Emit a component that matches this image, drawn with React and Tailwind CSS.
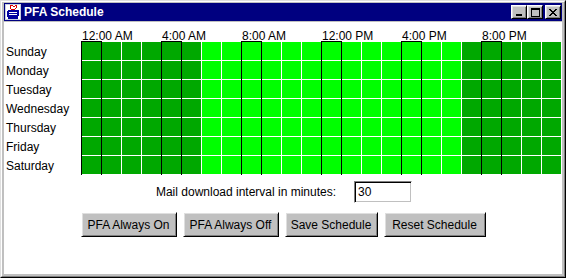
import React from 'react';

const days = ['Sunday', 'Monday', 'Tuesday', 'Wednesday', 'Thursday', 'Friday', 'Saturday'];
const hourLabels = ['12:00 AM', '4:00 AM', '8:00 AM', '12:00 PM', '4:00 PM', '8:00 PM'];
const hours = Array.from({ length: 24 }, (_, i) => i);

const isMarked = (h) => h >= 0 && h < 24 && h % 4 === 0;
const isDaytime = (h) => h >= 6 && h <= 18;

const raised = 'bg-[#c0c0c0] border border-t-white border-l-white border-r-black border-b-black shadow-[inset_1px_1px_0_#dfdfdf,inset_-1px_-1px_0_#808080]';

const AppIcon = () => (
  <svg width="16" height="16" viewBox="0 0 16 16" shapeRendering="crispEdges">
    <rect x="0" y="0" width="16" height="16" fill="#c8d0e0" />
    <rect x="1" y="1" width="14" height="14" fill="#ffffff" />
    <path d="M5 2 L7 1 L9 3 L11 1 L12 3 L10 5 L6 5 Z" fill="none" stroke="#e00000" strokeWidth="1" />
    <rect x="2" y="6" width="12" height="7" rx="2" fill="#0000a0" />
    <rect x="4" y="8" width="8" height="1" fill="#ffffff" />
    <rect x="4" y="10" width="8" height="1" fill="#ffffff" />
    <rect x="3" y="13" width="10" height="2" fill="#0000a0" />
  </svg>
);

const CloseGlyph = () => (
  <svg width="8" height="7" viewBox="0 0 8 7" shapeRendering="crispEdges">
    {[
      [0, 0], [1, 0], [6, 0], [7, 0],
      [1, 1], [2, 1], [5, 1], [6, 1],
      [2, 2], [3, 2], [4, 2], [5, 2],
      [3, 3], [4, 3],
      [2, 4], [3, 4], [4, 4], [5, 4],
      [1, 5], [2, 5], [5, 5], [6, 5],
      [0, 6], [1, 6], [6, 6], [7, 6],
    ].map(([x, y]) => (
      <rect key={`${x}-${y}`} x={x} y={y} width="1" height="1" fill="#000" />
    ))}
  </svg>
);

const TitleButton = ({ children, className = '' }) => (
  <div className={`w-[16px] h-[14px] flex items-center justify-center ${raised} ${className}`}>
    {children}
  </div>
);

const ScheduleGrid = () => (
  <div className="flex">
    {hours.map((h) => (
      <React.Fragment key={h}>
        <div className={`w-px h-[134px] ${isMarked(h) || isMarked(h - 1) ? 'bg-black' : 'bg-white'}`} />
        <div className="flex flex-col w-[19px]">
          <div className={`h-px ${isMarked(h) ? 'bg-black' : 'bg-white'}`} />
          {days.map((d) => (
            <div
              key={d}
              className={`h-[18px] mb-px ${isDaytime(h) ? 'bg-[#00ff00]' : 'bg-[#00a800]'}`}
            />
          ))}
        </div>
      </React.Fragment>
    ))}
    <div className={`w-px h-[134px] ${isMarked(23) ? 'bg-black' : 'bg-white'}`} />
  </div>
);

const App = () => {
  return (
    <div className="w-[566px] h-[278px] bg-[#c0c0c0] border border-t-[#dfdfdf] border-l-[#dfdfdf] border-r-black border-b-black font-['Liberation_Sans',Arial,sans-serif] text-[12px] text-black">
      <div className="h-full flex flex-col border border-t-white border-l-white border-r-[#808080] border-b-[#808080] px-[2px] pt-px pb-[2px]">
        {/* title bar */}
        <div className="h-[18px] bg-[#000080] flex items-center pl-px pr-px shrink-0">
          <AppIcon />
          <span className="ml-[3px] text-white font-bold text-[12px] leading-none">PFA Schedule</span>
          <div className="ml-auto flex items-center">
            <TitleButton>
              <div className="w-[6px] h-[2px] bg-black mt-[6px] -ml-[1px]" />
            </TitleButton>
            <TitleButton>
              <div className="w-[9px] h-[9px] border border-black border-t-2" />
            </TitleButton>
            <TitleButton className="ml-[2px]">
              <CloseGlyph />
            </TitleButton>
          </div>
        </div>

        {/* content */}
        <div className="mt-px flex-1 bg-white flex flex-col">
          <div className="flex pl-[78px] pt-[8px]">
            {hourLabels.map((l) => (
              <div key={l} className="w-[80px] h-[11px] leading-[13px] whitespace-nowrap">
                {l}
              </div>
            ))}
          </div>

          <div className="flex">
            <div className="w-[77px] pl-[2px] pt-[2px]">
              {days.map((d) => (
                <div key={d} className="h-[19px] leading-[19px] whitespace-nowrap">
                  {d}
                </div>
              ))}
            </div>
            <ScheduleGrid />
          </div>

          <div className="mt-[5px] flex items-center justify-center gap-[18px] pl-[2px]">
            <span className="whitespace-nowrap">Mail download interval in minutes:</span>
            <div className="w-[58px] h-[22px] bg-white border border-t-[#808080] border-l-[#808080] border-r-white border-b-white shadow-[inset_1px_1px_0_#000,inset_-1px_-1px_0_#c0c0c0] pl-[3px] flex items-center">
              30
            </div>
          </div>

          <div className="mt-[9px] flex justify-center gap-[6px]">
            <button className={`w-[96px] h-[25px] ${raised} text-[12px]`}>PFA Always On</button>
            <button className={`w-[96px] h-[25px] ${raised} text-[12px]`}>PFA Always Off</button>
            <button className={`w-[93px] h-[25px] ${raised} text-[12px]`}>Save Schedule</button>
            <button className={`w-[102px] h-[25px] ${raised} text-[12px]`}>Reset Schedule</button>
          </div>
        </div>
      </div>
    </div>
  );
};

export default App;
